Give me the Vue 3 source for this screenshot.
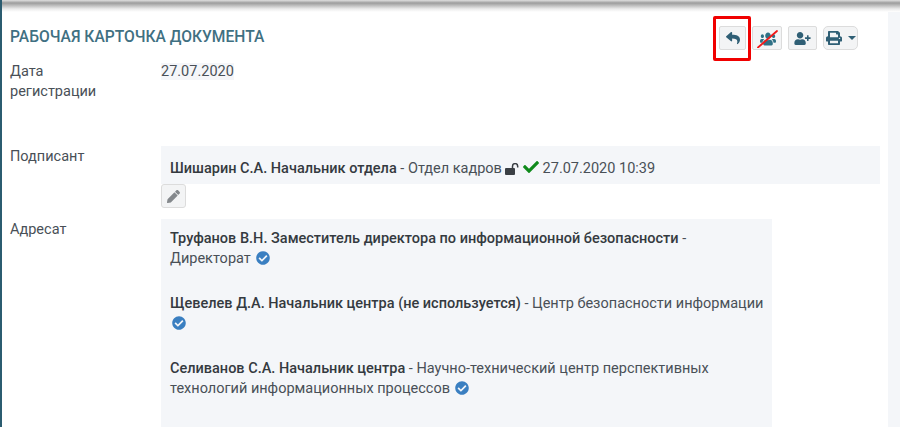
<script setup>
const printPath = 'M448 192V77.25c0-8.49-3.37-16.62-9.37-22.63L393.37 9.37c-6-6-14.14-9.37-22.63-9.37H96C78.33 0 64 14.33 64 32v160c-35.35 0-64 28.65-64 64v112c0 8.84 7.16 16 16 16h48v96c0 17.67 14.33 32 32 32h320c17.67 0 32-14.33 32-32v-96h48c8.84 0 16-7.16 16-16V256c0-35.35-28.65-64-64-64zm-64 256H128v-96h256v96zm0-224H128V64h192v48c0 8.84 7.16 16 16 16h48v96zm48 72c-13.25 0-24-10.75-24-24 0-13.26 10.75-24 24-24s24 10.74 24 24c0 13.25-10.75 24-24 24z';
const circlePath = 'M504 256c0 136.967-111.033 248-248 248S8 392.967 8 256 119.033 8 256 8s248 111.033 248 248zM227.314 387.314l184-184c6.248-6.248 6.248-16.379 0-22.627l-22.627-22.627c-6.248-6.249-16.379-6.249-22.628 0L216 308.118l-70.059-70.059c-6.248-6.248-16.379-6.248-22.628 0l-22.627 22.627c-6.248 6.248-6.248 16.379 0 22.627l104 104c6.249 6.249 16.379 6.249 22.628.001z';

const addressees = [
  { name: 'Труфанов В.Н. Заместитель директора по информационной безопасности', dept: 'Директорат' },
  { name: 'Щевелев Д.А. Начальник центра (не используется)', dept: 'Центр безопасности информации' },
  { name: 'Селиванов С.А. Начальник центра', dept: 'Научно-технический центр перспективных технологий информационных процессов' }
];
</script>

<template>
  <div class="page">
    <div class="topbar"></div>
    <div class="card">
      <div class="head">
        <h2 class="title">РАБОЧАЯ КАРТОЧКА ДОКУМЕНТА</h2>
        <div class="tools">
          <button class="btn reply">
            <svg width="14" height="14" viewBox="0 0 512 512"><path fill="#2f5f75" d="M8.309 189.836L184.313 37.851C199.719 24.546 224 35.347 224 56.015v80.053c160.629 1.839 288 34.032 288 186.258 0 61.441-39.581 122.309-83.333 154.132-13.653 9.931-33.111-2.533-28.077-18.631 45.344-145.012-21.507-183.51-176.59-185.742V360c0 20.7-24.3 31.453-39.687 18.164l-176.004-152c-11.071-9.562-11.086-26.753 0-36.328z"/></svg>
            <span class="marker"></span>
          </button>
          <button class="btn wide">
            <svg width="21" height="20" viewBox="0 0 21 20">
              <path fill="#2f7186" transform="translate(3 3.5) scale(.025 .029)" d="M96 224c35.3 0 64-28.7 64-64s-28.7-64-64-64-64 28.7-64 64 28.7 64 64 64zm448 0c35.3 0 64-28.7 64-64s-28.7-64-64-64-64 28.7-64 64 28.7 64 64 64zm32 32h-64c-17.6 0-33.5 7.1-45.1 18.6 40.3 22.1 68.9 62 75.1 109.4h66c17.7 0 32-14.3 32-32v-32c0-35.3-28.7-64-64-64zm-256 0c61.9 0 112-50.1 112-112S381.9 32 320 32 208 82.1 208 144s50.1 112 112 112zm76.8 32h-8.3c-20.8 10-43.9 16-68.5 16s-47.6-6-68.5-16h-8.3C179.6 288 128 339.6 128 403.2V432c0 26.5 21.5 48 48 48h288c26.5 0 48-21.5 48-48v-28.8c0-63.6-51.6-115.2-115.2-115.2zm-223.7-13.4C161.5 263.1 145.6 256 128 256H64c-35.3 0-64 28.7-64 64v32c0 17.7 14.3 32 32 32h65.9c6.3-47.4 34.9-87.3 75.2-109.4z"/>
              <path stroke="#f01818" stroke-width="1.8" stroke-linecap="round" d="M1 19.5L20 3"/>
            </svg>
          </button>
          <button class="btn wide-sm">
            <svg width="17" height="13" viewBox="0 0 640 512"><path fill="#2f5f75" d="M624 208h-64v-64c0-8.8-7.2-16-16-16h-32c-8.8 0-16 7.2-16 16v64h-64c-8.8 0-16 7.2-16 16v32c0 8.8 7.2 16 16 16h64v64c0 8.8 7.2 16 16 16h32c8.8 0 16-7.2 16-16v-64h64c8.8 0 16-7.2 16-16v-32c0-8.8-7.2-16-16-16zm-400 48c70.7 0 128-57.3 128-128S294.7 0 224 0 96 57.3 96 128s57.3 128 128 128zm89.6 32h-16.7c-22.2 10.2-46.9 16-72.9 16s-50.6-5.8-72.9-16h-16.7C60.2 288 0 348.2 0 422.4V464c0 26.5 21.5 48 48 48h352c26.5 0 48-21.5 48-48v-41.6c0-74.2-60.2-134.4-134.4-134.4z"/></svg>
          </button>
          <button class="btn print">
            <svg width="16" height="14" viewBox="0 0 512 512" preserveAspectRatio="none"><path fill="#2f5f75" :d="printPath"/></svg>
            <span class="caret"></span>
          </button>
        </div>
      </div>

      <div class="row date-row">
        <div class="label">Дата<br>регистрации</div>
        <div class="value"><span class="date">27.07.2020</span></div>
      </div>

      <div class="row signer-row">
        <div class="label">Подписант</div>
        <div class="value">
          <div class="signer">
            <b>Шишарин С.А. Начальник отдела</b> - Отдел кадров
            <svg class="icon" width="14" height="12" viewBox="0 0 14 12">
              <rect x="0" y="5" width="10" height="7" rx="1" fill="#3a3f44"/>
              <path d="M7.5 5V3.2a2.6 2.6 0 0 1 5.2 0v1.4" fill="none" stroke="#3a3f44" stroke-width="1.5"/>
            </svg>
            <svg class="icon check" width="16" height="16" viewBox="0 0 512 512"><path fill="#0f8a1b" d="M173.898 439.404l-166.4-166.4c-9.997-9.997-9.997-26.206 0-36.204l36.203-36.204c9.997-9.998 26.207-9.998 36.204 0L192 312.69 432.095 72.596c9.997-9.997 26.207-9.997 36.204 0l36.203 36.204c9.997 9.997 9.997 26.206 0 36.204l-294.4 294.401c-9.998 9.997-26.207 9.997-36.204-.001z"/></svg>
            27.07.2020 10:39
          </div>
          <button class="btn edit">
            <svg width="13" height="13" viewBox="0 0 512 512"><path fill="#84888c" d="M497.9 142.1l-46.1 46.1c-4.7 4.7-12.3 4.7-17 0l-111-111c-4.7-4.7-4.7-12.3 0-17l46.1-46.1c18.7-18.7 49.1-18.7 67.9 0l60.1 60.1c18.8 18.7 18.8 49.1 0 67.9zM284.2 99.8L21.6 362.4.4 483.9c-2.9 16.4 11.4 30.6 27.8 27.8l121.5-21.3 262.6-262.6c4.7-4.7 4.7-12.3 0-17l-111-111c-4.8-4.7-12.4-4.7-17.1 0z"/></svg>
          </button>
        </div>
      </div>

      <div class="row addr-row">
        <div class="label">Адресат</div>
        <div class="addr">
          <p v-for="item in addressees" :key="item.name" class="addr-item">
            <b>{{ item.name }}</b> - {{ item.dept }}
            <svg class="icon badge" width="14" height="14" viewBox="0 0 512 512"><path fill="#3a7fc1" :d="circlePath"/></svg>
          </p>
        </div>
      </div>
    </div>
    <div class="side"></div>
  </div>
</template>

<style>
html, body {
  margin: 0;
  overflow: hidden;
}
</style>

<style scoped>
.page {
  position: relative;
  display: flex;
  width: 900px;
  height: 427px;
  overflow: hidden;
  background: #fff;
  border-left: 2px solid #2b5c70;
  box-sizing: border-box;
  font-family: Roboto, "Liberation Sans", sans-serif;
  font-size: 14.5px;
  line-height: 20px;
  color: #495057;
}

.topbar {
  position: absolute;
  top: 0;
  left: 0;
  right: 0;
  height: 12px;
  background: linear-gradient(#e0e0e0 0, #9c9c9c 3px, #c4c4c4 6px, #ececec 9px, #fff 12px);
}

.card {
  width: 886px;
  padding: 26px 8px 0;
  box-sizing: border-box;
}

.side {
  flex: 1;
  margin-top: 12px;
  background: #f4f6f9;
}

.head {
  display: flex;
  justify-content: space-between;
  height: 36px;
}

.title {
  margin: 0;
  padding-top: 1px;
  font-size: 15.6px;
  line-height: 20px;
  font-weight: 500;
  color: #3f7082;
}

.tools {
  display: flex;
  align-items: flex-start;
  gap: 6px;
  margin-right: 22px;
}

.btn {
  position: relative;
  display: flex;
  align-items: center;
  justify-content: center;
  height: 24px;
  padding: 0;
  background: #f3f4f5;
  border: 1px solid #dcdcdc;
  border-radius: 2px;
}

.reply { width: 27px; }
.wide { width: 30px; }
.wide-sm { width: 29px; }

.print {
  width: 35px;
  gap: 6px;
  border-radius: 5px;
}

.caret {
  width: 0;
  height: 0;
  border-left: 4px solid transparent;
  border-right: 4px solid transparent;
  border-top: 4px solid #2f5f75;
}

.marker {
  position: absolute;
  top: -11px;
  left: -7px;
  width: 32px;
  height: 39px;
  border: 3px solid #f00000;
  border-radius: 2px;
}

.row {
  display: grid;
  grid-template-columns: 151px 1fr;
}

.date-row {
  height: 84px;
}

.date {
  background: #f5f6f9;
}

.signer-row {
  height: 73px;
}

.signer-row .label,
.addr-row .label {
  padding-top: 1px;
}

.signer {
  height: 38px;
  padding: 0 9px;
  line-height: 46px;
  background: #f4f6f9;
}

.signer b,
.addr b {
  font-weight: 500;
  color: #343a40;
}

.icon {
  vertical-align: -2px;
}

.check {
  margin-left: 3.5px;
}

.badge {
  margin-left: 1.5px;
}

.edit {
  width: 25px;
  height: 24px;
  border-radius: 3px;
}

.addr {
  width: 611px;
  height: 220px;
  padding: 10px 4px 0 9px;
  box-sizing: border-box;
  background: #f4f6f9;
}

.addr-item {
  margin: 0 0 25px;
}
</style>
